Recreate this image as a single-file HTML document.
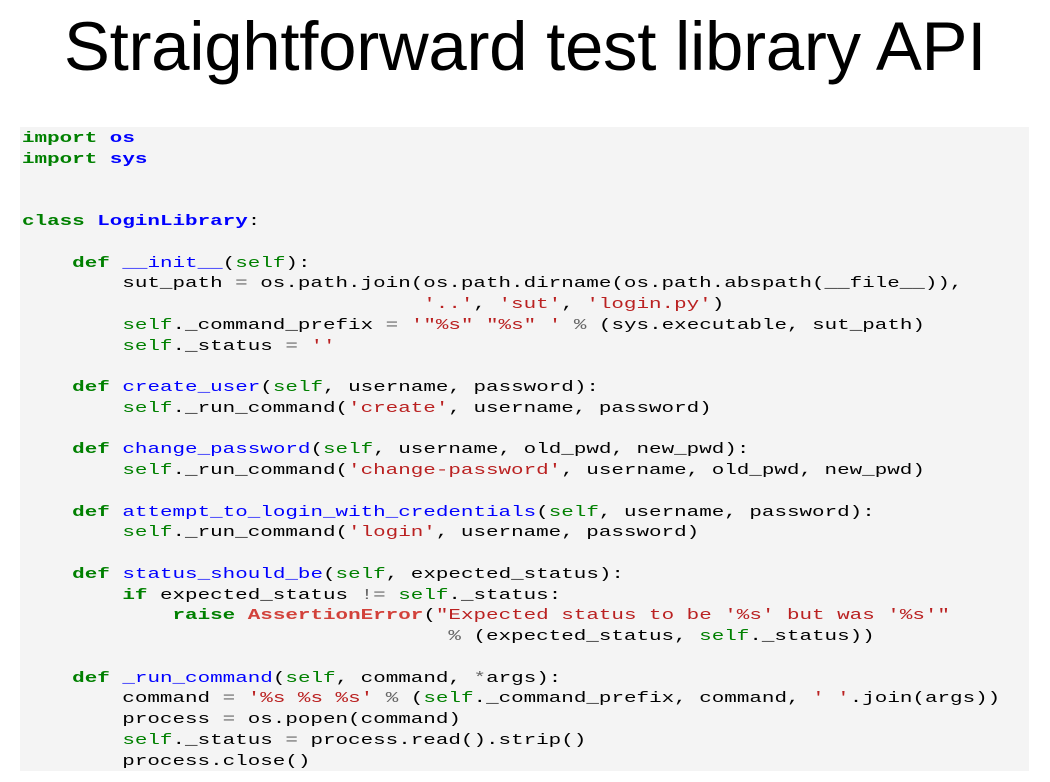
<!DOCTYPE html>
<html><head><meta charset="utf-8"><style>
body{margin:0;width:1050px;height:782px;background:#fff;overflow:hidden;position:relative}
h1{position:absolute;left:0;top:7px;width:1050px;text-align:center;margin:0;font:69px "Liberation Sans",Arial,sans-serif;color:#000;letter-spacing:-0.3px;white-space:nowrap}
.box{position:absolute;left:20px;top:127px;width:1009px;height:644px;background:#f4f4f4}
pre{position:absolute;left:2px;top:2px;margin:0;font:15px/20.75px "Liberation Mono",monospace;color:#000;white-space:pre;transform:scaleX(1.393);transform-origin:0 0}
.k{color:#008000;font-weight:bold}.n{color:#0000ff;font-weight:bold}.f{color:#0000ff}.s{color:#ba2121}.o{color:#666}.sf{color:#008000}.e{color:#d2413a;font-weight:bold}
</style></head><body>
<h1>Straightforward test library API</h1>
<div class="box"><pre><span class="k">import</span> <span class="n">os</span>
<span class="k">import</span> <span class="n">sys</span>


<span class="k">class</span> <span class="n">LoginLibrary</span>:

    <span class="k">def</span> <span class="f">__init__</span>(<span class="sf">self</span>):
        sut_path <span class="o">=</span> os.path.join(os.path.dirname(os.path.abspath(__file__)),
                                <span class="s">'..'</span>, <span class="s">'sut'</span>, <span class="s">'login.py'</span>)
        <span class="sf">self</span>._command_prefix <span class="o">=</span> <span class="s">'"%s" "%s" '</span> <span class="o">%</span> (sys.executable, sut_path)
        <span class="sf">self</span>._status <span class="o">=</span> <span class="s">''</span>

    <span class="k">def</span> <span class="f">create_user</span>(<span class="sf">self</span>, username, password):
        <span class="sf">self</span>._run_command(<span class="s">'create'</span>, username, password)

    <span class="k">def</span> <span class="f">change_password</span>(<span class="sf">self</span>, username, old_pwd, new_pwd):
        <span class="sf">self</span>._run_command(<span class="s">'change-password'</span>, username, old_pwd, new_pwd)

    <span class="k">def</span> <span class="f">attempt_to_login_with_credentials</span>(<span class="sf">self</span>, username, password):
        <span class="sf">self</span>._run_command(<span class="s">'login'</span>, username, password)

    <span class="k">def</span> <span class="f">status_should_be</span>(<span class="sf">self</span>, expected_status):
        <span class="k">if</span> expected_status <span class="o">!=</span> <span class="sf">self</span>._status:
            <span class="k">raise</span> <span class="e">AssertionError</span>(<span class="s">"Expected status to be '%s' but was '%s'"</span>
                                  <span class="o">%</span> (expected_status, <span class="sf">self</span>._status))

    <span class="k">def</span> <span class="f">_run_command</span>(<span class="sf">self</span>, command, <span class="o">*</span>args):
        command <span class="o">=</span> <span class="s">'%s %s %s'</span> <span class="o">%</span> (<span class="sf">self</span>._command_prefix, command, <span class="s">' '</span>.join(args))
        process <span class="o">=</span> os.popen(command)
        <span class="sf">self</span>._status <span class="o">=</span> process.read().strip()
        process.close()</pre></div>
</body></html>
